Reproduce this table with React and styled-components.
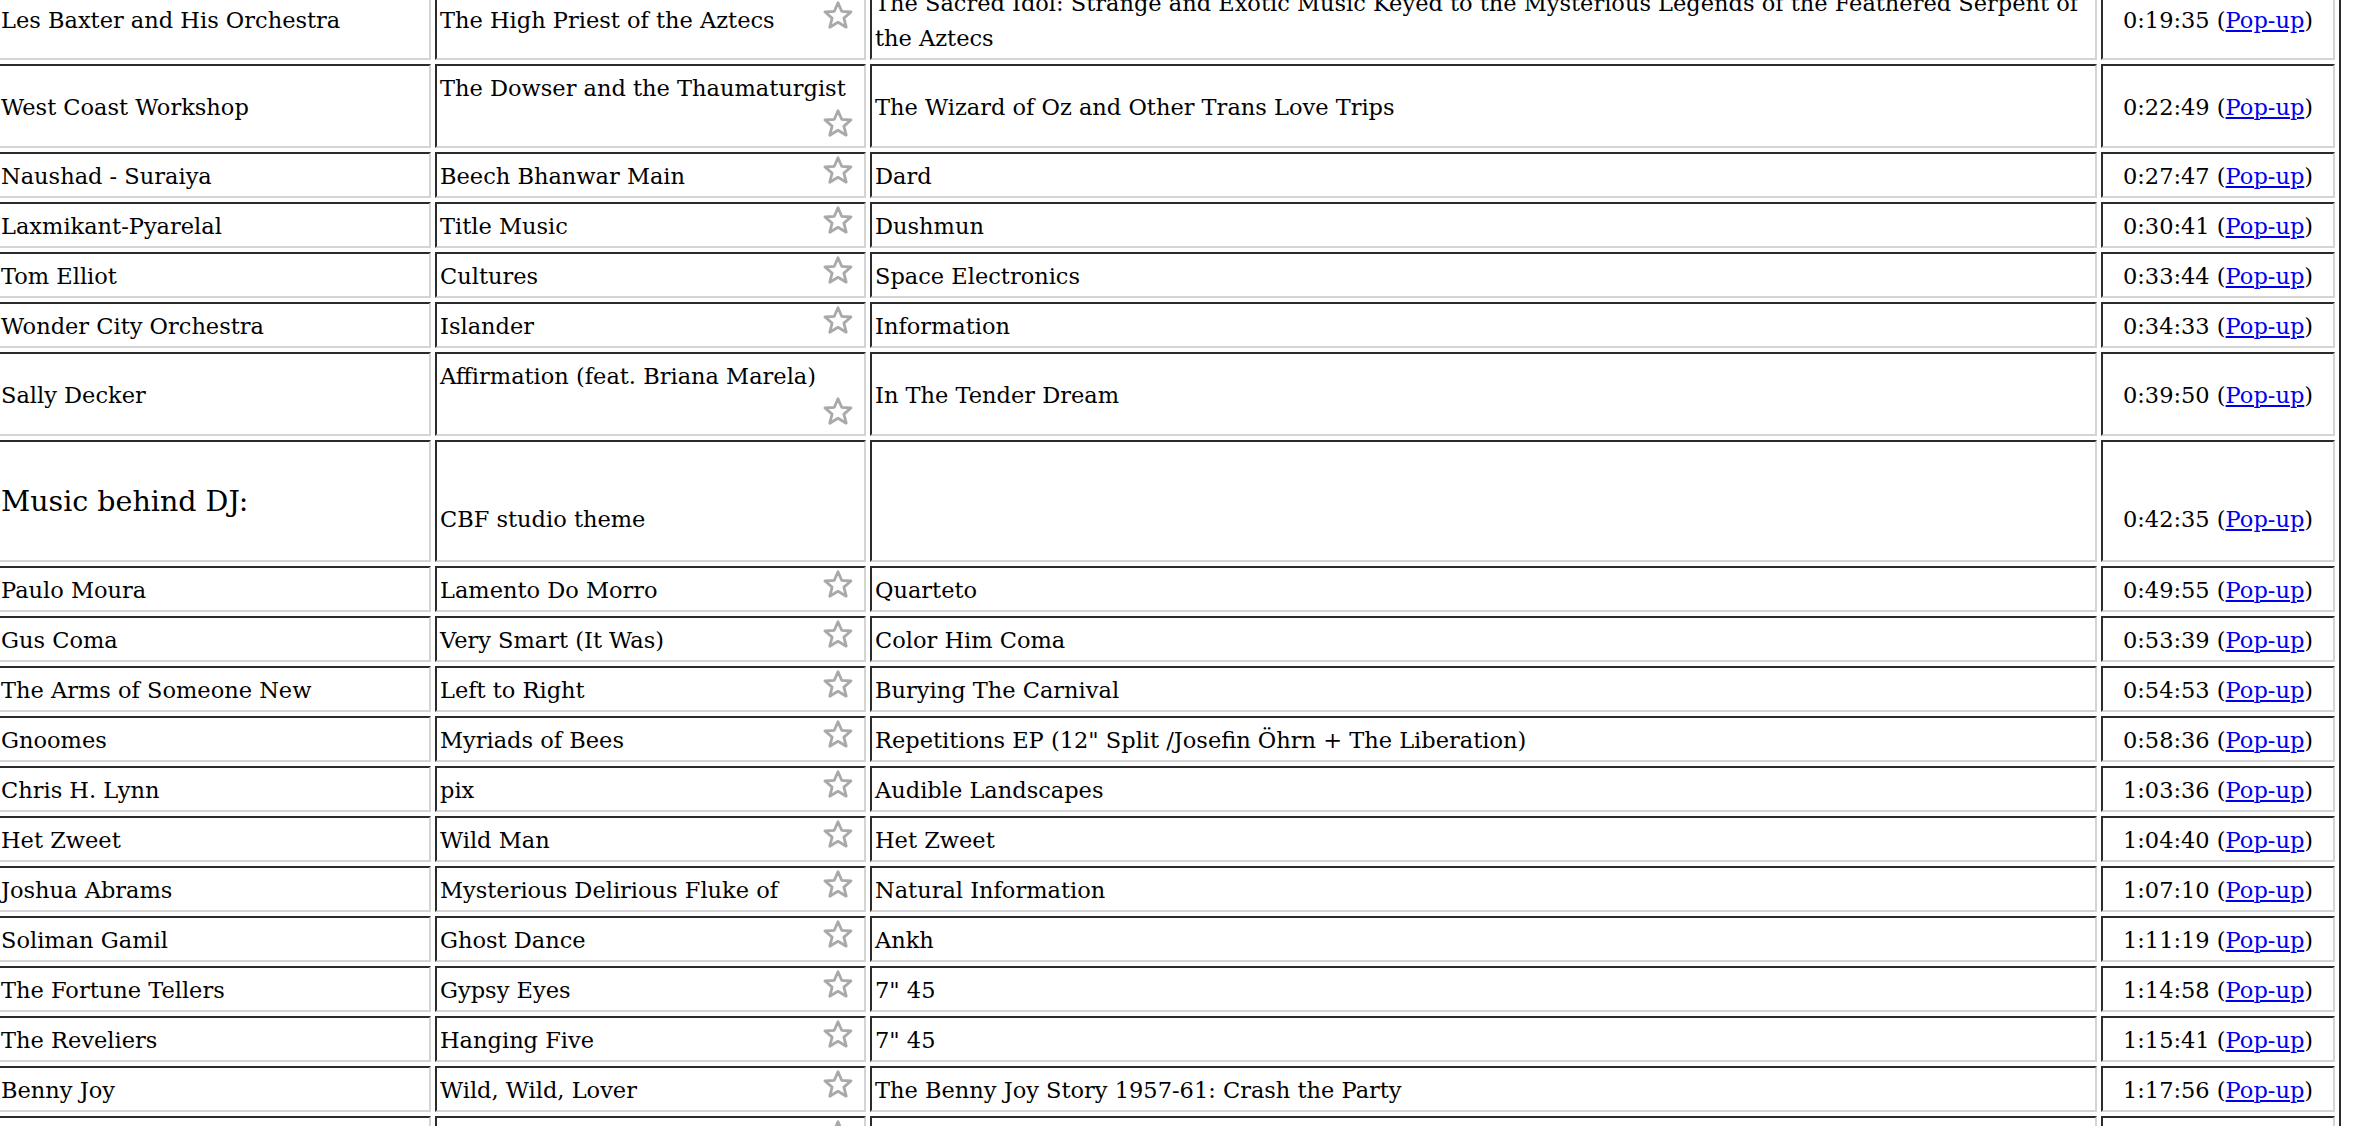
import React from 'react'
import styled, { createGlobalStyle, css } from 'styled-components'

const GlobalStyle = createGlobalStyle`
  html, body {
    margin: 0;
    padding: 0;
    background: #fff;
    overflow: hidden;
  }
  body {
    font-family: "DejaVu Serif", "Liberation Serif", serif;
    font-size: 22.5px;
    color: #000;
  }
`

const Playlist = styled.table`
  margin: -27px 0 0 -10px;
  width: 2351px;
  table-layout: fixed;
  border-collapse: separate;
  border-spacing: 4px;
  border: 2px solid;
  border-color: #d4d4d4 #2b2b2b #2b2b2b #d4d4d4;
`

const Cell = styled.td`
  box-sizing: border-box;
  padding: 4.5px 3px 2.5px;
  border: 2px solid;
  border-color: #2b2b2b #d4d4d4 #d4d4d4 #2b2b2b;
  line-height: 35px;
  vertical-align: middle;
  text-align: ${p => (p.$center ? 'center' : 'left')};

  &:nth-child(1) { width: 435px; }
  &:nth-child(2) { width: 431px; }
  &:nth-child(3) { width: 1227px; }
  &:nth-child(4) { width: 234px; }
`

const Heading = styled.h3`
  margin: 37.5px 0;
  font-size: 28.5px;
  font-weight: normal;
  line-height: 36px;
`

const Gap = styled.span`
  display: block;
  height: 35px;
`

const PopLink = styled.a`
  color: #0000ee;
  text-decoration: underline;
`

const StarBox = styled.svg`
  float: right;
  width: 30px;
  height: 28px;
  margin: -2.5px 8px 9.5px 0;
  ${p =>
    p.$below &&
    css`
      float: none;
      display: block;
      margin: 3px 8px 7px auto;
    `}
`

const Star = ({ below }) => (
  <StarBox $below={below} viewBox="0 0 30 28">
    <path
      d="M15 1.8 L18.7 10.3 L28 11 L20.9 17.1 L23.2 26.2 L15 21.3 L6.8 26.2 L9.1 17.1 L2 11 L11.3 10.3 Z"
      fill="#fdfdfd"
      stroke="#a9a9a9"
      strokeWidth="2.8"
      strokeLinejoin="round"
    />
  </StarBox>
)

const tracks = [
  ['Les Baxter and His Orchestra', 'The High Priest of the Aztecs', 'The Sacred Idol: Strange and Exotic Music Keyed to the Mysterious Legends of the Feathered Serpent of the Aztecs', '0:19:35'],
  ['West Coast Workshop', 'The Dowser and the Thaumaturgist', 'The Wizard of Oz and Other Trans Love Trips', '0:22:49', true],
  ['Naushad - Suraiya', 'Beech Bhanwar Main', 'Dard', '0:27:47'],
  ['Laxmikant-Pyarelal', 'Title Music', 'Dushmun', '0:30:41'],
  ['Tom Elliot', 'Cultures', 'Space Electronics', '0:33:44'],
  ['Wonder City Orchestra', 'Islander', 'Information', '0:34:33'],
  ['Sally Decker', 'Affirmation (feat. Briana Marela)', 'In The Tender Dream', '0:39:50', true],
  'dj',
  ['Paulo Moura', 'Lamento Do Morro', 'Quarteto', '0:49:55'],
  ['Gus Coma', 'Very Smart (It Was)', 'Color Him Coma', '0:53:39'],
  ['The Arms of Someone New', 'Left to Right', 'Burying The Carnival', '0:54:53'],
  ['Gnoomes', 'Myriads of Bees', 'Repetitions EP (12" Split /Josefin Öhrn + The Liberation)', '0:58:36'],
  ['Chris H. Lynn', 'pix', 'Audible Landscapes', '1:03:36'],
  ['Het Zweet', 'Wild Man', 'Het Zweet', '1:04:40'],
  ['Joshua Abrams', 'Mysterious Delirious Fluke of', 'Natural Information', '1:07:10'],
  ['Soliman Gamil', 'Ghost Dance', 'Ankh', '1:11:19'],
  ['The Fortune Tellers', 'Gypsy Eyes', '7" 45', '1:14:58'],
  ['The Reveliers', 'Hanging Five', '7" 45', '1:15:41'],
  ['Benny Joy', 'Wild, Wild, Lover', 'The Benny Joy Story 1957-61: Crash the Party', '1:17:56'],
  ['Ray Barretto', 'Soul Drummers', 'Acid', '1:20:31'],
  ['The Sandpipers', 'Inchworm', 'Guantanamera', '1:23:02'],
]

const Time = ({ value }) => (
  <>
    {value} (<PopLink href="#">Pop-up</PopLink>)
  </>
)

export default function App() {
  return (
    <>
      <GlobalStyle />
      <Playlist>
        <tbody>
          {tracks.map((t, i) =>
            t === 'dj' ? (
              <tr key={i}>
                <Cell>
                  <Heading>Music behind DJ:</Heading>
                </Cell>
                <Cell>
                  <Gap />
                  CBF studio theme
                </Cell>
                <Cell />
                <Cell $center>
                  <Gap />
                  <Time value="0:42:35" />
                </Cell>
              </tr>
            ) : (
              <tr key={i}>
                <Cell>{t[0]}</Cell>
                <Cell>
                  {t[1]}
                  <Star below={t[4]} />
                </Cell>
                <Cell>{t[2]}</Cell>
                <Cell $center>
                  <Time value={t[3]} />
                </Cell>
              </tr>
            )
          )}
        </tbody>
      </Playlist>
    </>
  )
}
